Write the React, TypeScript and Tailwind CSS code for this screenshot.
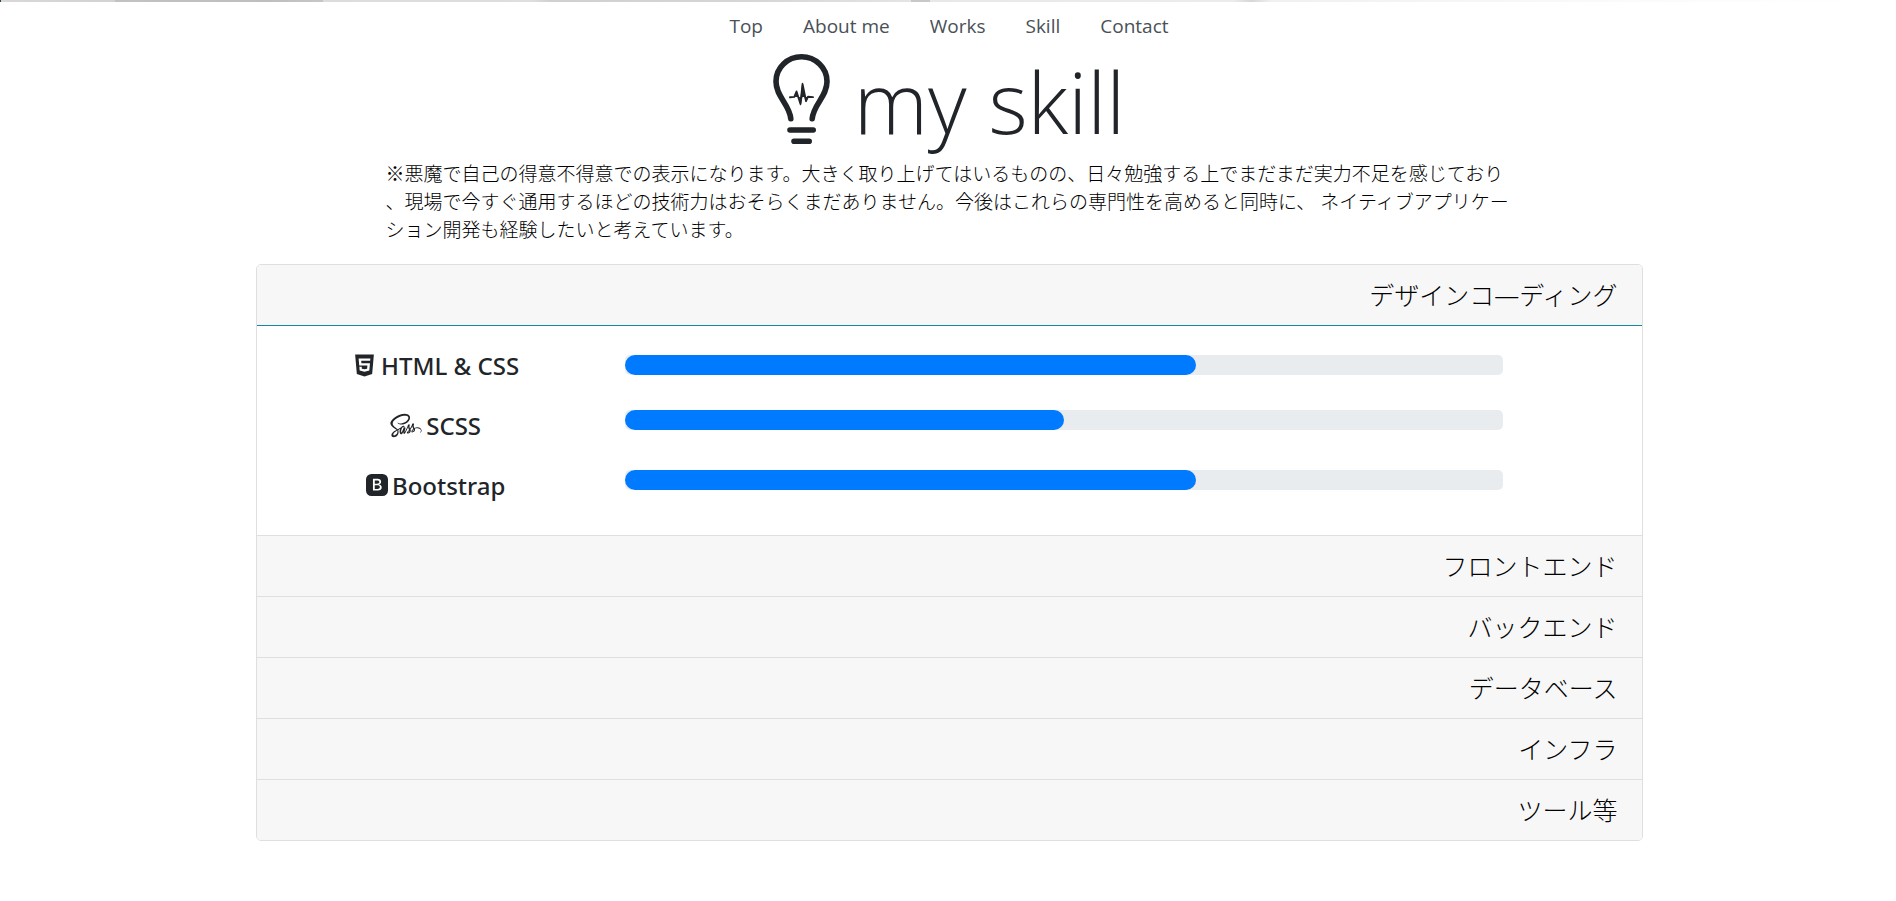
import { useState } from "react";
import type { ReactNode } from "react";
import { BsBootstrapFill } from "react-icons/bs";
import { FaHtml5, FaSass } from "react-icons/fa";

const links = ["Top", "About me", "Works", "Skill", "Contact"];

type Skill = { name: string; icon: ReactNode; level: number };

const designSkills: Skill[] = [
  { name: "HTML & CSS", icon: <FaHtml5 className="size-[25px]" />, level: 65 },
  { name: "SCSS", icon: <FaSass className="h-[25px] w-8" />, level: 50 },
  { name: "Bootstrap", icon: <BsBootstrapFill className="size-[22px]" />, level: 65 },
];

const sections: { title: string; skills: Skill[] }[] = [
  { title: "デザインコ―ディング", skills: designSkills },
  { title: "フロントエンド", skills: [] },
  { title: "バックエンド", skills: [] },
  { title: "データベース", skills: [] },
  { title: "インフラ", skills: [] },
  { title: "ツール等", skills: [] },
];

function BulbIcon() {
  return (
    <svg viewBox="0 0 57 90" className="h-[90px] w-[57px]" fill="none" stroke="currentColor" strokeLinecap="round" aria-hidden="true">
      <path d="M17.8 64.800C16.500 50 3 43 3 27.500A25.500 24.700 0 0 1 54 27.500C54 43 40.500 50 39.200 64.800" strokeWidth="5.600" />
      <path d="M17 76H40.200M21 87.200H36.200" strokeWidth="5.600" />
      <path d="M17 43.300L21.300 42.900L23.500 37.500L27.500 50L29.500 30L33 47L35 42.700L40 43.100" strokeWidth="1.900" strokeLinejoin="round" />
      <path d="M22 43L23.500 37L25.500 43ZM27.500 43L29.500 28L32 43ZM26 43H29.500L27.500 52ZM31.500 43H35L33 48.500Z" fill="currentColor" stroke="none" />
    </svg>
  );
}

function SkillRow({ skill }: { skill: Skill }) {
  return (
    <div className="group grid h-[60px] grid-cols-12 first:h-[55px]">
      <h5 className="col-span-3 flex items-start justify-center gap-1 pt-[5px] font-['Noto_Sans',sans-serif] text-2xl leading-8 font-medium group-first:pt-0">
        <span className="flex h-[30px] items-center">{skill.icon}</span>
        {skill.name}
      </h5>
      <div className="col-span-8 pt-[5px] pr-4 pl-[18px]">
        <div
          role="progressbar"
          aria-label={skill.name}
          aria-valuenow={skill.level}
          aria-valuemin={0}
          aria-valuemax={100}
          className="h-5 overflow-hidden rounded-[5px] bg-[#e9ecef]"
        >
          <div className="h-full rounded-[10px] bg-[#007bff]" style={{ width: `${skill.level}%` }} />
        </div>
      </div>
    </div>
  );
}

export default function App() {
  const [open, setOpen] = useState(0);

  return (
    <div className="font-['Open_Sans','Noto_Sans_CJK_JP',sans-serif] text-[#212529]">
      <div className="h-0.5 border-l border-[#27485f] bg-[linear-gradient(90deg,#d8d8d8_0%,#d2d2d2_6%,#c2c2c2_6%,#bebebe_14%,#c6c6c6_17%,#dcdcdc_17%,#dedede_28%,#d0d0d0_29%,#d6d6d6_40%,#e4e4e4_48%,#c8c8c8_48%,#c8c8c8_49%,#e8e8e8_49%,#ececec_65%,#d6d6d6_66%,#f0f0f0_67%,#fafafa_85%,#ffffff_98%)]" />
      <nav className="flex h-12 items-center justify-center gap-10 pl-0.5 text-[19px] text-[#495057]">
        {links.map((link) => (
          <a key={link} href="#">
            {link}
          </a>
        ))}
      </nav>
      <main className="pl-0.5">
        <h1 className="flex h-[110px] items-start justify-center gap-6 text-[84px] leading-[104px] font-light">
          <span className="pt-1">
            <BulbIcon />
          </span>
          my skill
        </h1>
        <p className="mx-auto max-w-[1127px] text-[19px] leading-7 font-light text-black [line-break:anywhere]">
          ※悪魔で自己の得意不得意での表示になります。大きく取り上げてはいるものの、日々勉強する上でまだまだ実力不足を感じており、現場で今すぐ通用するほどの技術力はおそらくまだありません。今後はこれらの専門性を高めると同時に、 ネイティブアプリケーション開発も経験したいと考えています。
        </p>
        <div className="mx-auto mt-5 max-w-[1387px] overflow-hidden rounded-[5px] border border-[#dfdfdf]">
          {sections.map((section, i) => (
            <section key={section.title} className={i > 0 ? "border-t border-[#dfdfdf]" : ""}>
              <h2>
                <button
                  type="button"
                  aria-expanded={open === i}
                  onClick={() => setOpen(open === i ? -1 : i)}
                  className="block h-[60px] w-full bg-[#f7f7f7] px-6 text-right text-[25px] leading-[60px] font-light text-black"
                >
                  {section.title}
                </button>
              </h2>
              {open === i && section.skills.length > 0 && (
                <div className="border-t border-[#17899f] bg-white px-2 pt-6 pb-2.5">
                  {section.skills.map((skill) => (
                    <SkillRow key={skill.name} skill={skill} />
                  ))}
                </div>
              )}
            </section>
          ))}
        </div>
      </main>
    </div>
  );
}
